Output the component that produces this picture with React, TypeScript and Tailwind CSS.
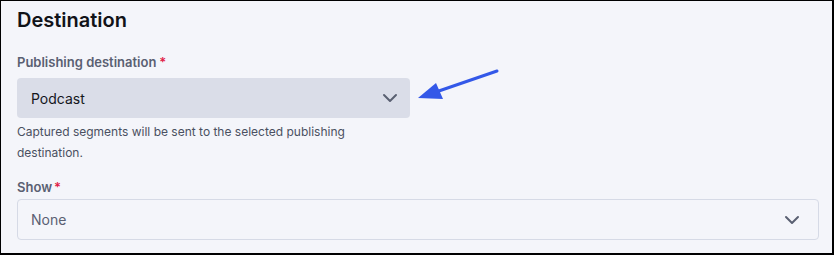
import React from "react";

function Chevron({ className }: { className?: string }) {
  return (
    <svg width="24" height="24" viewBox="0 0 24 24" fill="none" stroke="currentColor" strokeWidth="2" strokeLinecap="round" strokeLinejoin="round" className={className}>
      <path d="M6 9l6 6 6-6" />
    </svg>
  );
}

export default function App() {
  return (
    <div
      className="relative w-[834px] h-[255px] bg-[#f4f5fa] border-l border-t border-r-2 border-b-2 border-black overflow-hidden"
      style={{ fontFamily: "Inter, 'Noto Sans', sans-serif" }}
    >
      <div className="flex flex-col pl-4 pr-[13px] pt-[4px]">
        <h2 className="text-[20px] leading-[30px] font-semibold text-[#111318]">Destination</h2>
        <label className="mt-[17px] text-[13px] leading-[20px] font-semibold text-[#5a6072]">
          Publishing destination<span className="text-[#e11d48] ml-[3px]">*</span>
        </label>
        <div className="mt-[6px] w-[393px] h-[40px] rounded-[4px] bg-[#dadde8] flex items-center justify-between pl-[14px] pr-[8px]">
          <span className="text-[14px] text-[#15171c]">Podcast</span>
          <Chevron className="text-[#5a6072]" />
        </div>
        <p className="mt-[3px] w-[360px] text-[12px] leading-[21px] text-[#4a5061]">
          Captured segments will be sent to the selected publishing destination.
        </p>
        <label className="mt-[14px] text-[13px] leading-[20px] font-semibold text-[#5a6072]">
          Show<span className="text-[#e11d48] ml-[2px]">*</span>
        </label>
        <div className="mt-[2px] h-[41px] rounded-[4px] border border-[#d6dae6] bg-[#f4f5fa] flex items-center justify-between pl-[13px] pr-[14px]">
          <span className="text-[14px] text-[#5a6072]">None</span>
          <Chevron className="text-[#5a6072]" />
        </div>
      </div>
      <svg className="absolute left-0 top-0 pointer-events-none" width="834" height="255">
        <line x1="496" y1="70" x2="432" y2="92" stroke="#3358e8" strokeWidth="3" strokeLinecap="round" />
        <polygon points="417,97 435,82 442,98" fill="#3358e8" />
      </svg>
    </div>
  );
}
